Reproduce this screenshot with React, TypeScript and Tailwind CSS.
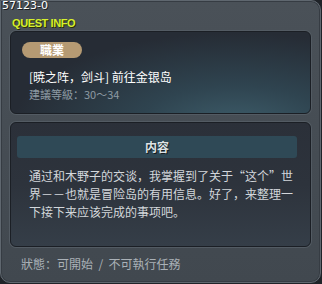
import React from "react";

const cjk = "font-['Noto_Sans_CJK_SC',sans-serif]";

const QuestInfo: React.FC = () => {
  return (
    <div className="w-[322px] h-[284px] bg-[#1f2328]">
      <div className="relative w-[321px] h-[283px] flex flex-col rounded-tr-[10px] rounded-b-[10px] border border-[#5f676f] bg-gradient-to-b from-[#4a5158] to-[#41484f] shadow-[inset_0_0_0_1px_#363c43]">
        {/* quest id label over the corner */}
        <span className="absolute left-[1px] top-[-2px] text-[11px] leading-[13px] text-white font-['DejaVu_Sans',sans-serif] [text-shadow:1px_1px_0_#1a1d21]">
          57123-0
        </span>

        <div className="h-[30px] pl-[11px] pt-[8px]">
          <span className="text-[11px] leading-[13px] font-bold tracking-[-0.4px] text-[#d6f02e] font-['Liberation_Sans',sans-serif] [text-shadow:1px_1px_0_#2a3000]">
            QUEST INFO
          </span>
        </div>

        {/* job / title panel */}
        <div className="mx-[9px] h-[83px] rounded-[6px] border border-[#1b1f25] shadow-[0_0_0_1px_#535b63] bg-[radial-gradient(ellipse_at_75%_115%,#3d5c69_0%,#2f4450_30%,#262c35_70%)] pl-[11px] pt-[10px]">
          <div className="w-[60px] h-[16px] rounded-full bg-[#b59a73] flex items-center justify-center">
            <span className={`${cjk} text-[12px] leading-[14px] font-bold text-white`}>職業</span>
          </div>
          <div className={`${cjk} mt-[11px] ml-[7px] text-[12px] leading-[16px] text-white`}>
            [暁之阵，剑斗] 前往金银岛
          </div>
          <div className={`${cjk} mt-[1px] ml-[7px] text-[11px] leading-[16px] text-[#8d9aa3]`}>
            建議等級：30～34
          </div>
        </div>

        {/* content panel */}
        <div className="mx-[9px] mt-[8px] h-[125px] rounded-[6px] border border-[#1b1f25] shadow-[0_0_0_1px_#535b63] bg-gradient-to-b from-[#2b3039] via-[#2d333c] to-[#353e48] pt-[13px]">
          <div className="ml-[6px] mr-[13px] h-[22px] rounded-[3px] bg-[#2f4956] flex items-center justify-center">
            <span className={`${cjk} text-[12px] leading-[14px] font-bold text-[#dde2e5] [text-shadow:1px_1px_0_#151a1e]`}>内容</span>
          </div>
          <p className={`${cjk} mt-[9px] pl-[18px] pr-[14px] text-[12px] leading-[18px] text-[#d3d7db]`}>
            通过和木野子的交谈，我掌握到了关于“这个”世界－－也就是冒险岛的有用信息。好了，来整理一下接下来应该完成的事项吧。
          </p>
        </div>

        <div className={`${cjk} pl-[20px] pt-[9px] text-[12px] leading-[16px] text-[#aab1b7] whitespace-pre`}>
          狀態：可開始  /  不可執行任務
        </div>
      </div>
    </div>
  );
};

export default function App() {
  return <QuestInfo />;
}
